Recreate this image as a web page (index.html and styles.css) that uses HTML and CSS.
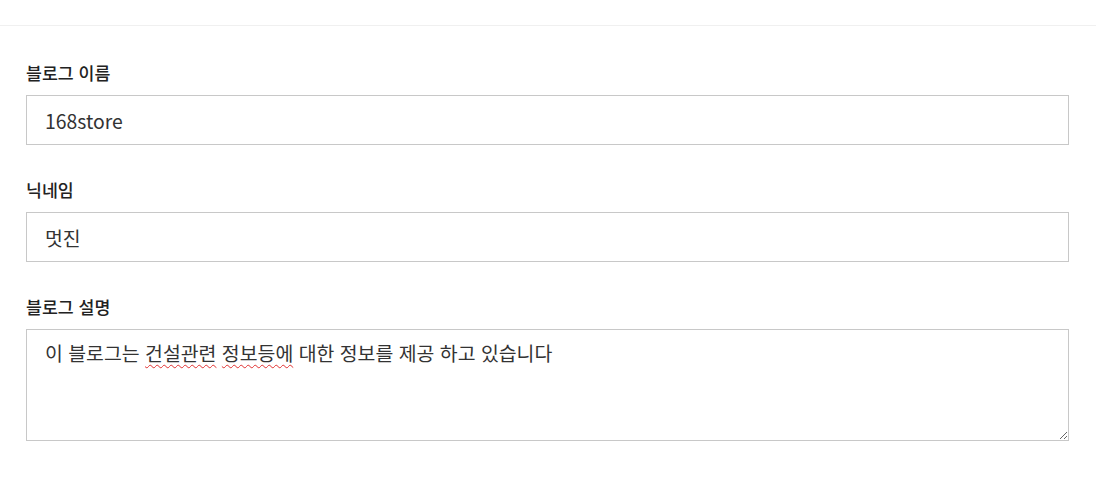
FILE: index.html
```html
<!DOCTYPE html>
<html lang="ko">
<head>
<meta charset="utf-8">
<link rel="stylesheet" href="styles.css">
</head>
<body>
<div class="topbar"></div>
<form class="form">
  <div class="field">
    <label class="label" for="name">블로그 이름</label>
    <input class="input" id="name" type="text" value="168store">
  </div>
  <div class="field">
    <label class="label" for="nick">닉네임</label>
    <input class="input" id="nick" type="text" value="멋진">
  </div>
  <div class="field">
    <label class="label" id="desc-label">블로그 설명</label>
    <div class="textarea" role="textbox" aria-multiline="true" aria-labelledby="desc-label" contenteditable="true" spellcheck="false">이 블로그는 <span class="spell">건설관련</span> <span class="spell">정보등에</span> 대한 정보를 제공 하고 있습니다</div>
  </div>
</form>
</body>
</html>
```
FILE: styles.css
```css
html, body {
  margin: 0;
  padding: 0;
  background: #fff;
}
body {
  font-family: "Noto Sans CJK KR", "Noto Sans", sans-serif;
  color: #222;
}
.topbar {
  height: 25px;
  border-bottom: 1px solid #f0f0f0;
}
.form {
  padding: 35px 27px 0 26px;
  display: flex;
  flex-direction: column;
  gap: 33px;
}
.field {
  display: flex;
  flex-direction: column;
  gap: 11px;
}
.label {
  font-size: 17.3px;
  font-weight: 500;
  line-height: 23px;
  color: #222;
}
.input, .textarea {
  box-sizing: border-box;
  width: 100%;
  margin: 0;
  border: 1px solid #c8c8c8;
  border-radius: 0;
  background: #fff;
  font-family: "Noto Sans CJK KR", "Noto Sans", sans-serif;
  font-size: 19.4px;
  color: #333;
  outline: none;
}
.input {
  height: 50px;
  padding: 0 18px;
}
.textarea {
  height: 112px;
  padding: 9px 18px;
  line-height: 28px;
  resize: vertical;
  overflow: auto;
  white-space: pre-wrap;
}
.spell {
  text-decoration: underline wavy #e03030;
  text-decoration-thickness: 1px;
  text-underline-offset: 3px;
}
```
